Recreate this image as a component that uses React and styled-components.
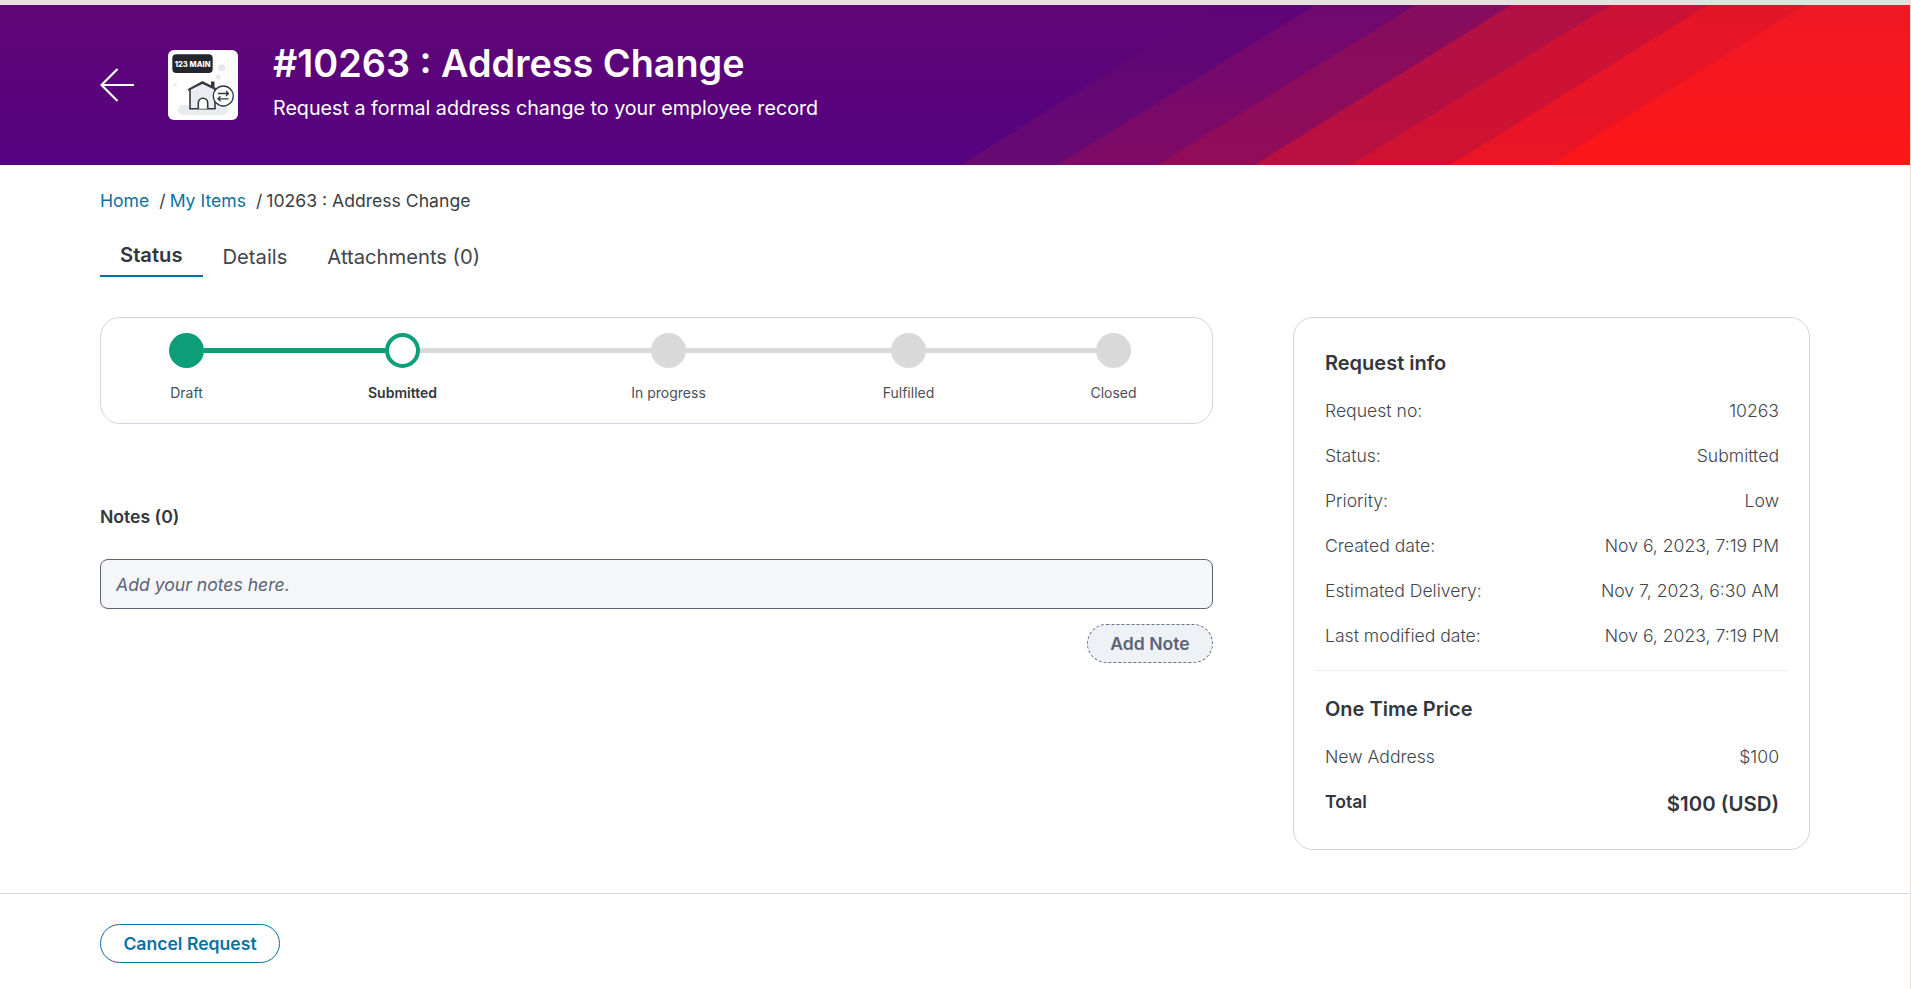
import React from "react";
import styled, { createGlobalStyle } from "styled-components";

const GlobalStyle = createGlobalStyle`
  * { box-sizing: border-box; }
  html, body { margin: 0; padding: 0; background: #fff; }
  body { font-family: "Inter", "Liberation Sans", sans-serif; color: #32363d; }
`;

const bands = [
  { top: 1216, bottom: 961, from: "#5e0478", to: "#670a72" },
  { top: 1316, bottom: 1058, from: "#700870", to: "#7e0a66" },
  { top: 1416, bottom: 1158, from: "#860c5e", to: "#920c58" },
  { top: 1512, bottom: 1255, from: "#b21045", to: "#b81040" },
  { top: 1612, bottom: 1351, from: "#cc1235", to: "#d01232" },
  { top: 1709, bottom: 1451, from: "#e51528", to: "#ea1525" },
  { top: 1806, bottom: 1551, from: "#ef1826", to: "#fd1617" },
];

const steps = [
  { label: "Draft", state: "done", segment: 181, segmentDone: true },
  { label: "Submitted", state: "current", segment: 231 },
  { label: "In progress", state: "todo", segment: 205 },
  { label: "Fulfilled", state: "todo", segment: 170 },
  { label: "Closed", state: "todo" },
];

const infoRows = [
  ["Request no:", "10263"],
  ["Status:", "Submitted"],
  ["Priority:", "Low"],
  ["Created date:", "Nov 6, 2023, 7:19 PM"],
  ["Estimated Delivery:", "Nov 7, 2023, 6:30 AM"],
  ["Last modified date:", "Nov 6, 2023, 7:19 PM"],
];

function HeaderStripes() {
  return (
    <Stripes viewBox="0 0 1911 160" preserveAspectRatio="none" aria-hidden="true">
      <defs>
        {bands.map((b, i) => (
          <linearGradient id={`band${i}`} key={b.top} x1="0" y1="0" x2="0" y2="1">
            <stop offset="0" stopColor={b.from} />
            <stop offset="1" stopColor={b.to} />
          </linearGradient>
        ))}
      </defs>
      {bands.map((b, i) => (
        <polygon
          key={b.top}
          fill={`url(#band${i})`}
          points={`${b.top},0 1911,0 1911,160 ${b.bottom},160`}
        />
      ))}
    </Stripes>
  );
}

function BackArrow() {
  return (
    <svg width="34" height="34" viewBox="0 0 34 34" fill="none" stroke="#fff" strokeWidth="2.2">
      <path d="M34 17H1.5M17.5 1L1.5 17l16 16" />
    </svg>
  );
}

function ItemIcon() {
  return (
    <svg width="70" height="70" viewBox="0 0 70 70">
      <circle cx="53.7" cy="17.7" r="3.5" fill="#e6e9ef" />
      <circle cx="50.3" cy="27" r="2.5" fill="#e6e9ef" />
      <path d="M5 32.7l4 4M9 32.7l-4 4" stroke="#dfe3e9" strokeWidth="1" />
      <rect x="9.7" y="55" width="50.3" height="10" rx="5" fill="#e8ebf0" />
      <rect x="4.3" y="4.3" width="40.4" height="18.7" rx="4" fill="#24262e" />
      <text x="24.6" y="16.8" textAnchor="middle" fontSize="7.6" fontWeight="800" fill="#fff" fontFamily="Inter, sans-serif">
        123 MAIN
      </text>
      <rect x="43" y="31.5" width="3.5" height="6" fill="#33363f" />
      <path d="M22 39v19.7h25V39L34.5 33z" fill="#e9ecf0" stroke="#33363f" strokeWidth="1.6" />
      <path d="M20 40l14.5-8L50 40" fill="none" stroke="#33363f" strokeWidth="1.6" />
      <path d="M30.3 58.7V53a4.7 4.7 0 0 1 9.4 0v5.7" fill="#fff" stroke="#33363f" strokeWidth="1.6" />
      <circle cx="55.3" cy="46" r="10" fill="#fff" stroke="#33363f" strokeWidth="1.3" />
      <path d="M50 43.5h10.5M58 41l2.5 2.5-2.5 2.5M60.5 48.8H50M52.5 46.3L50 48.8l2.5 2.5" fill="none" stroke="#33363f" strokeWidth="1.3" />
    </svg>
  );
}

export default function App() {
  return (
    <>
      <GlobalStyle />
      <Page>
        <Header>
          <HeaderStripes />
          <BackButton><BackArrow /></BackButton>
          <IconTile><ItemIcon /></IconTile>
          <HeaderText>
            <Title>#10263 : Address Change</Title>
            <Subtitle>Request a formal address change to your employee record</Subtitle>
          </HeaderText>
        </Header>

        <Content>
          <Breadcrumb>
            <Crumb>Home</Crumb>
            <Separator>/</Separator>
            <Crumb>My Items</Crumb>
            <Separator>/</Separator>
            <span>10263 : Address Change</span>
          </Breadcrumb>

          <Tabs>
            <Tab $active>Status</Tab>
            <Tab>Details</Tab>
            <Tab>Attachments (0)</Tab>
          </Tabs>

          <Columns>
            <div>
              <StepCard>
                {steps.map((s) => (
                  <React.Fragment key={s.label}>
                    <Step>
                      <Dot $state={s.state} />
                      <StepLabel $current={s.state === "current"}>{s.label}</StepLabel>
                    </Step>
                    {s.segment && <Segment $length={s.segment} $done={s.segmentDone} />}
                  </React.Fragment>
                ))}
              </StepCard>

              <NotesTitle>Notes (0)</NotesTitle>
              <NoteInput placeholder="Add your notes here." />
              <NoteActions>
                <AddNote>Add Note</AddNote>
              </NoteActions>
            </div>

            <InfoCard>
              <CardTitle>Request info</CardTitle>
              <RowList>
                {infoRows.map(([k, v]) => (
                  <InfoRow key={k}>
                    <span>{k}</span>
                    <span>{v}</span>
                  </InfoRow>
                ))}
              </RowList>
              <Divider />
              <CardTitle>One Time Price</CardTitle>
              <RowList>
                <InfoRow>
                  <span>New Address</span>
                  <span>$100</span>
                </InfoRow>
              </RowList>
              <TotalRow>
                <TotalLabel>Total</TotalLabel>
                <TotalValue>$100 (USD)</TotalValue>
              </TotalRow>
            </InfoCard>
          </Columns>
        </Content>

        <Footer>
          <CancelButton>Cancel Request</CancelButton>
        </Footer>
      </Page>
    </>
  );
}

const Page = styled.div`
  min-height: 100vh;
  display: flex;
  flex-direction: column;
  border-top: 5px solid #e4e0de;
  border-right: 1px solid #e4e0de;
`;

const Header = styled.header`
  position: relative;
  height: 160px;
  padding: 36px 0 0 100px;
  display: flex;
  align-items: flex-start;
  background: linear-gradient(180deg, #600577 0%, #550380 100%);
  overflow: hidden;
  color: #fff;
`;

const Stripes = styled.svg`
  position: absolute;
  inset: 0;
  width: 100%;
  height: 100%;
`;

const BackButton = styled.div`
  position: relative;
  width: 34px;
  height: 34px;
  margin: 27px 34px 0 0;
`;

const IconTile = styled.div`
  position: relative;
  width: 70px;
  height: 70px;
  margin: 9px 35px 0 0;
  background: #fff;
  border-radius: 6px;
  overflow: hidden;
`;

const HeaderText = styled.div`
  position: relative;
`;

const Title = styled.h1`
  margin: 0;
  font-size: 37.8px;
  line-height: 44px;
  font-weight: 600;
`;

const Subtitle = styled.p`
  margin: 9px 0 0;
  font-size: 19.7px;
  line-height: 28px;
  font-weight: 400;
`;

const Content = styled.main`
  padding: 24px 100px 0 100px;
`;

const Breadcrumb = styled.nav`
  display: flex;
  font-size: 17.6px;
  line-height: 24px;
  color: #3a3d42;
`;

const Crumb = styled.a`
  color: #0b72a0;
`;

const Separator = styled.span`
  margin: 0 4px 0 10px;
`;

const Tabs = styled.div`
  display: flex;
  align-items: flex-start;
  margin-top: 30px;
`;

const Tab = styled.div`
  padding: 0 20px 8px;
  margin-top: ${(p) => (p.$active ? "0" : "2px")};
  font-size: 20.2px;
  line-height: 24px;
  font-weight: ${(p) => (p.$active ? 600 : 400)};
  color: ${(p) => (p.$active ? "#32363d" : "#41464d")};
  border-bottom: ${(p) => (p.$active ? "2px solid #0072a3" : "0")};
`;

const Columns = styled.div`
  display: grid;
  grid-template-columns: 1113px 517px;
  column-gap: 80px;
  align-items: start;
  margin-top: 40px;
`;

const StepCard = styled.section`
  height: 107px;
  padding: 15px 0 0 68px;
  display: flex;
  align-items: flex-start;
  border: 1px solid #d0d5dd;
  border-radius: 20px;
`;

const Step = styled.div`
  width: 35px;
  display: flex;
  flex-direction: column;
  align-items: center;
`;

const Dot = styled.div`
  flex: none;
  width: 35px;
  height: 35px;
  border-radius: 50%;
  background: ${(p) =>
    p.$state === "done" ? "#0b9e78" : p.$state === "current" ? "#fff" : "#d9d9d9"};
  border: ${(p) => (p.$state === "current" ? "4px solid #0b9e78" : "0")};
`;

const StepLabel = styled.div`
  margin-top: 16px;
  font-size: 14px;
  line-height: 18px;
  white-space: nowrap;
  font-weight: ${(p) => (p.$current ? 600 : 400)};
  color: ${(p) => (p.$current ? "#32363d" : "#4a4f57")};
`;

const Segment = styled.div`
  flex: none;
  width: ${(p) => p.$length}px;
  height: 5px;
  margin-top: 15px;
  background: ${(p) => (p.$done ? "#0b9e78" : "#d9d9d9")};
`;

const NotesTitle = styled.h2`
  margin: 81px 0 0;
  font-size: 17.6px;
  line-height: 24px;
  font-weight: 600;
`;

const NoteInput = styled.input`
  display: block;
  width: 100%;
  height: 50px;
  margin-top: 30px;
  padding: 0 15px;
  background: #f4f6f8;
  border: 1px solid #5b6475;
  border-radius: 8px;
  font-family: inherit;
  font-size: 17.6px;

  &::placeholder {
    font-style: italic;
    color: #5b6475;
    opacity: 1;
  }
`;

const NoteActions = styled.div`
  display: flex;
  justify-content: flex-end;
  margin-top: 15px;
`;

const AddNote = styled.button`
  width: 126px;
  height: 39px;
  padding: 0;
  background: #eef1f5;
  border: 1px dashed #6b7280;
  border-radius: 20px;
  font-family: inherit;
  font-size: 17.6px;
  font-weight: 600;
  color: #5b6475;
`;

const InfoCard = styled.aside`
  padding: 32px 30px 26px 31px;
  height: 533px;
  border: 1px solid #d0d5dd;
  border-radius: 20px;
`;

const CardTitle = styled.h3`
  margin: 0;
  font-size: 20px;
  line-height: 26px;
  font-weight: 600;
  color: #32363d;
`;

const RowList = styled.div`
  margin-top: 12px;
`;

const InfoRow = styled.div`
  height: 45px;
  display: flex;
  align-items: center;
  justify-content: space-between;
  font-size: 17.6px;
  font-weight: 300;
  color: #41464d;
`;

const Divider = styled.hr`
  height: 1px;
  margin: 12px -10px 25px -11px;
  border: 0;
  background: #eceef1;
`;

const TotalRow = styled.div`
  display: flex;
  justify-content: space-between;
  align-items: center;
  margin-top: 3px;
  height: 40px;
`;

const TotalLabel = styled.span`
  margin-top: -2px;
  font-size: 17.6px;
  font-weight: 600;
`;

const TotalValue = styled.span`
  margin-top: 3px;
  font-size: 20.4px;
  font-weight: 600;
`;

const Footer = styled.footer`
  margin-top: auto;
  height: 96px;
  padding: 30px 0 0 100px;
  border-top: 1px solid #d8dae0;
`;

const CancelButton = styled.button`
  width: 180px;
  height: 39px;
  padding: 0;
  background: #fff;
  border: 1px solid #0072a3;
  border-radius: 20px;
  font-family: inherit;
  font-size: 17.6px;
  font-weight: 600;
  color: #0b72a0;
`;
